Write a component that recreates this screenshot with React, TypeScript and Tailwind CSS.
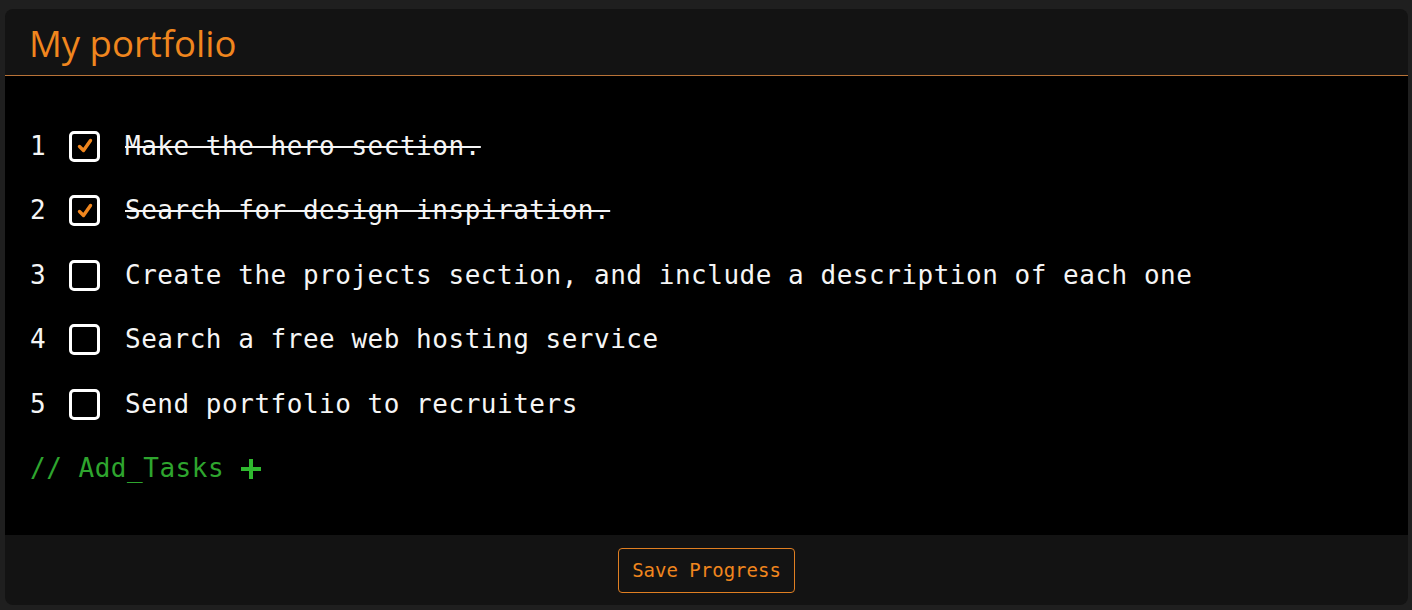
import { useState } from "react"

type Task = { id: number; text: string; done: boolean }

const initialTasks: Task[] = [
  { id: 1, text: "Make the hero section.", done: true },
  { id: 2, text: "Search for design inspiration.", done: true },
  { id: 3, text: "Create the projects section, and include a description of each one", done: false },
  { id: 4, text: "Search a free web hosting service", done: false },
  { id: 5, text: "Send portfolio to recruiters", done: false },
]

function Checkbox({ checked, onToggle }: { checked: boolean; onToggle: () => void }) {
  return (
    <button
      onClick={onToggle}
      className="w-[31px] h-[31px] shrink-0 rounded-[5px] border-[3px] border-white bg-black flex items-center justify-center"
    >
      {checked && (
        <svg width="18" height="18" viewBox="0 0 18 18" fill="none">
          <path d="M3.5 9.5 L7.5 13.5 L14.5 3.5" stroke="#f0861e" strokeWidth="3.4" strokeLinecap="round" strokeLinejoin="round" />
        </svg>
      )}
    </button>
  )
}

export default function App() {
  const [tasks, setTasks] = useState(initialTasks)

  const toggle = (id: number) =>
    setTasks((t) => t.map((task) => (task.id === id ? { ...task, done: !task.done } : task)))

  return (
    <div className="min-h-screen w-full bg-[#1f1f1f] pt-[9px] pl-[5px] pr-[4px] pb-[4px]">
      <div className="rounded-[8px] bg-[#131313] overflow-hidden">
        <div className="h-[66px] pl-[24px] flex items-center">
          <h1 className="text-[36.5px] leading-none text-[#f0861e] pt-[2px]" style={{ fontFamily: '"Open Sans", "Noto Sans", sans-serif' }}>
            My portfolio
          </h1>
        </div>
        <div className="h-px bg-[#b87338]" />

        <div
          className="bg-black pl-[25px] pt-[38px] pb-[34px] text-[26px] tracking-[0.52px] text-[#f5f5f5]"
          style={{ fontFamily: '"DejaVu Sans Mono", monospace' }}
        >
          {tasks.map((task) => (
            <div key={task.id} className="h-[64.5px] flex items-center">
              <span className="w-[39px] shrink-0">{task.id}</span>
              <Checkbox checked={task.done} onToggle={() => toggle(task.id)} />
              <span className={`ml-[25px] whitespace-nowrap ${task.done ? "line-through decoration-2" : ""}`}>
                {task.text}
              </span>
            </div>
          ))}
          <div className="h-[64.5px] flex items-center text-[#2ea52e]">
            <span className="whitespace-nowrap">// Add_Tasks</span>
            <svg className="ml-[15px]" width="24" height="24" viewBox="0 0 24 24" fill="none">
              <path d="M12 2 V22 M2 12 H22" stroke="#2fb82f" strokeWidth="4" />
            </svg>
          </div>
        </div>

        <div className="h-[70px] flex items-center justify-center">
          <button
            className="h-[45px] px-[13px] rounded-[4px] border border-[#e07f22] text-[#f0861e] text-[19px]"
            style={{ fontFamily: '"DejaVu Sans Mono", monospace' }}
          >
            Save Progress
          </button>
        </div>
      </div>
    </div>
  )
}
